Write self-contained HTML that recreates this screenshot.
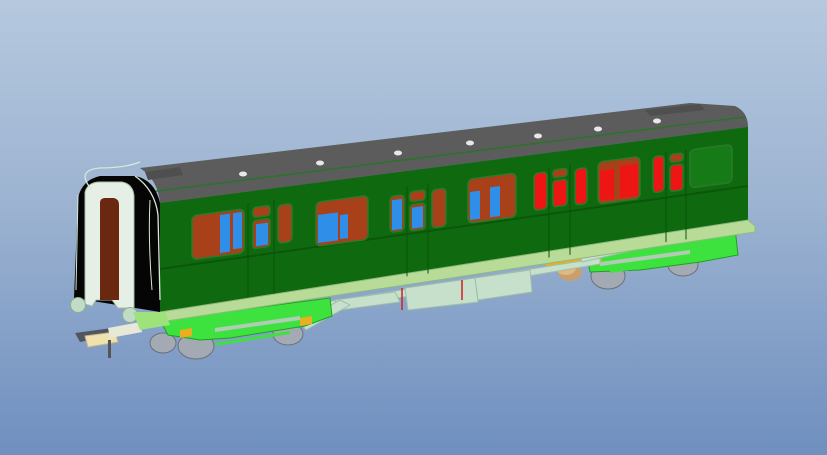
<!DOCTYPE html>
<html><head><meta charset="utf-8"><style>
html,body{margin:0;padding:0;width:827px;height:455px;overflow:hidden}
body{background:linear-gradient(180deg,#b5c8de 0%,#9cb3d1 45%,#6f8fbf 100%)}
svg{position:absolute;left:0;top:0}
</style></head><body>
<svg width="827" height="455" viewBox="0 0 827 455" xmlns="http://www.w3.org/2000/svg">
<!-- rear bogie -->
<g>
<ellipse cx="608" cy="276" rx="17" ry="13" fill="#a4aab4" stroke="#6a707a"/>
<ellipse cx="683" cy="265" rx="15" ry="11" fill="#a4aab4" stroke="#6a707a"/>
<polygon points="585,245 735,228 738,255 700,262 640,270 590,272" fill="#3ee23e" stroke="#1fa01f"/>
<polygon points="600,262 690,250 690,254 600,266" fill="#b0ccb4"/>
<polygon points="610,270 690,258 690,261 610,273" fill="#3ee23e"/>
<ellipse cx="570" cy="272" rx="12" ry="9" fill="#c8a070"/>
<ellipse cx="566" cy="268" rx="10" ry="7" fill="#e0b880"/>
<polygon points="545,262 600,254 602,262 548,270" fill="#e8b020"/>
</g>
<!-- underframe truss -->
<g fill="#c6e0cc" stroke="#9fbfa8" stroke-width="1">
<polygon points="320,303 600,258 600,264 320,311"/>
<polygon points="405,288 475,278 478,302 408,310"/>
<polygon points="475,278 530,270 532,292 478,300"/>
<polygon points="335,300 395,292 400,302 340,310"/>
<polygon points="580,255 650,240 652,246 582,262"/>
<polygon points="300,322 340,300 350,305 306,330"/>
</g>
<line x1="402" y1="288" x2="402" y2="310" stroke="#cc2020" stroke-width="1.5"/>
<line x1="462" y1="280" x2="462" y2="300" stroke="#cc2020" stroke-width="1.5"/>
<!-- front bogie -->
<g>
<ellipse cx="163" cy="343" rx="13" ry="10" fill="#a4aab4" stroke="#6a707a"/>
<ellipse cx="196" cy="346" rx="18" ry="13" fill="#a4aab4" stroke="#6a707a"/>
<ellipse cx="288" cy="334" rx="15" ry="11" fill="#a4aab4" stroke="#6a707a"/>
<polygon points="160,320 330,298 332,316 305,326 230,338 200,340 168,335" fill="#3ee23e" stroke="#1fa01f"/>
<polygon points="215,328 300,316 300,320 215,332" fill="#b0ccb4"/>
<polygon points="215,343 290,331 290,334 215,346" fill="#3ee23e"/>
<polygon points="180,330 192,328 192,336 180,338" fill="#e8b020"/>
<polygon points="300,318 312,316 312,324 300,326" fill="#e8b020"/>
</g>
<!-- roof -->
<path d="M140,168 L690,103 L735,106 Q748,112 748,127 L160,203 Q158,180 140,168 Z" fill="#5c5c5c"/>
<path d="M160,203 L748,127 L748,131 L160,208 Z" fill="#444"/>
<line x1="150" y1="192" x2="745" y2="117" stroke="#1f7a1f" stroke-width="1.2"/>
<polygon points="645,110 700,104 705,110 650,116" fill="#4f4f4f"/>
<polygon points="145,172 180,167 183,175 148,180" fill="#4f4f4f"/>
<g fill="#e8e8e8">
<ellipse cx="243" cy="174" rx="4" ry="2.5"/><ellipse cx="320" cy="163" rx="4" ry="2.5"/>
<ellipse cx="398" cy="153" rx="4" ry="2.5"/><ellipse cx="470" cy="143" rx="4" ry="2.5"/>
<ellipse cx="538" cy="136" rx="4" ry="2.5"/><ellipse cx="598" cy="129" rx="4" ry="2.5"/>
<ellipse cx="657" cy="121" rx="4" ry="2.5"/>
</g>
<!-- body side -->
<polygon points="160,203 748,127 748,220 160,312" fill="#0f6a0f"/>
<polygon points="160,268 748,185 748,187 160,270" fill="#0a560a"/>
<!-- solebar -->
<polygon points="160,312 748,220 755,226 755,232 160,322" fill="#b8dc98" stroke="#8fb880" stroke-width="1"/>
<!-- windows (skewed) -->
<g transform="matrix(1,-0.132,0,1,0,0)">
<g stroke="#2a7a2a" stroke-width="1.5">
<rect x="192" y="241" width="52" height="44" rx="5" fill="#a8401a"/>
<rect x="253" y="241" width="17" height="10" rx="3" fill="#a8401a"/>
<rect x="253" y="254" width="17" height="28" rx="3" fill="#a8401a"/>
<rect x="278" y="242" width="14" height="38" rx="4" fill="#a8401a"/>
<rect x="316" y="244" width="52" height="44" rx="5" fill="#a8401a"/>
<rect x="390" y="248" width="14" height="36" rx="4" fill="#a8401a"/>
<rect x="410" y="246" width="15" height="10" rx="3" fill="#a8401a"/>
<rect x="410" y="259" width="15" height="26" rx="3" fill="#a8401a"/>
<rect x="432" y="247" width="14" height="38" rx="4" fill="#a8401a"/>
<rect x="468" y="241" width="48" height="44" rx="5" fill="#a8401a"/>
<rect x="534" y="244" width="13" height="37" rx="4" fill="#ee1515"/>
<rect x="553" y="243" width="14" height="8" rx="3" fill="#a8401a"/>
<rect x="553" y="254" width="14" height="26" rx="3" fill="#ee1515"/>
<rect x="575" y="245" width="12" height="36" rx="4" fill="#ee1515"/>
<rect x="598" y="241" width="42" height="42" rx="5" fill="#a8401a"/>
<rect x="653" y="243" width="11" height="36" rx="4" fill="#ee1515"/>
<rect x="670" y="243" width="13" height="8" rx="3" fill="#a8401a"/>
<rect x="670" y="254" width="13" height="26" rx="3" fill="#ee1515"/>
<rect x="690" y="241" width="42" height="38" rx="5" fill="#167a16"/>
</g>
<g fill="#2f8fe8">
<rect x="220" y="244" width="10" height="38"/><rect x="233" y="244" width="9" height="36"/>
<rect x="256" y="258" width="12" height="22"/>
<rect x="318" y="257" width="20" height="28"/><rect x="340" y="260" width="8" height="24"/>
<rect x="392" y="252" width="10" height="30"/><rect x="412" y="262" width="11" height="21"/>
<rect x="470" y="254" width="10" height="28"/><rect x="490" y="252" width="10" height="30"/>
</g>
<g fill="#ee1515">
<rect x="600" y="250" width="14" height="30"/><rect x="620" y="248" width="18" height="32"/>
</g>
<g stroke="#0a520a" stroke-width="1">
<line x1="248" y1="236" x2="248" y2="330"/><line x1="274" y1="236" x2="274" y2="330"/>
<line x1="407" y1="240" x2="407" y2="330"/><line x1="428" y1="240" x2="428" y2="330"/>
<line x1="549" y1="240" x2="549" y2="330"/><line x1="570" y1="240" x2="570" y2="330"/>
<line x1="666" y1="240" x2="666" y2="330"/><line x1="686" y1="240" x2="686" y2="330"/>
</g>
</g>
<!-- front end -->
<path d="M160,203 Q155,180 135,176 L100,176 Q82,180 78,198 L74,298 L160,312 Z" fill="#050505"/>
<path d="M85,192 Q88,182 100,182 L122,182 Q133,184 134,196 L134,308 L118,308 L112,300 L96,300 L92,306 L85,304 Z" fill="#e6efe6" stroke="#a8bca8"/>
<path d="M100,203 Q100,198 105,198 L114,198 Q119,199 119,205 L119,300 L100,300 Z" fill="#6a2810"/>
<path d="M92,190 Q75,170 100,168 Q125,168 140,162 M135,176 Q155,190 158,215 L160,300" fill="none" stroke="#d8e8d8" stroke-width="1.3"/>
<path d="M78,195 L76,290 M150,200 Q148,240 152,290" fill="none" stroke="#d8e8d8" stroke-width="1"/>
<circle cx="78" cy="305" r="7.5" fill="#c0dcc4" stroke="#90ac94"/>
<circle cx="130" cy="315" r="7.5" fill="#c0dcc4" stroke="#90ac94"/>
<polygon points="75,333 112,328 114,335 80,342" fill="#505560"/>
<polygon points="85,336 115,332 118,342 88,347" fill="#efe2b0" stroke="#c8b888"/>
<polygon points="108,328 140,322 142,332 110,338" fill="#e8e8d8"/>
<rect x="108" y="340" width="3" height="18" fill="#555"/>
<polygon points="133,312 165,312 170,325 140,330" fill="#9de27a"/>
</svg>
</body></html>
